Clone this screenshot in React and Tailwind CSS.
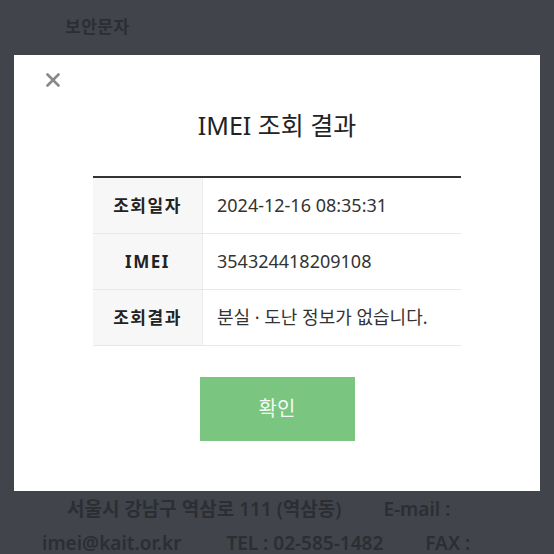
import React from "react";

const rows = [
  { label: "조회일자", value: "2024-12-16 08:35:31" },
  { label: "IMEI", value: "354324418209108" },
  { label: "조회결과", value: "분실 · 도난 정보가 없습니다." },
];

const App = () => {
  return (
    <div
      className="relative h-[554px] w-[554px] overflow-hidden bg-[#41444b]"
      style={{ fontFamily: '"Noto Sans", "Noto Sans CJK KR", sans-serif' }}
    >
      <div className="h-[55px] pl-[65px] pt-[14px]">
        <p className="text-[17px] font-bold tracking-[0.5px] text-[#2c2e33]">보안문자</p>
      </div>

      <div className="mx-[14px] h-[436px] bg-white">
        <div className="h-[50px] pl-[32px] pt-[18px]">
          <svg width="14" height="14" viewBox="0 0 14 14">
            <path d="M1.5 1.5 L12.5 12.5 M12.5 1.5 L1.5 12.5" stroke="#888" strokeWidth="2.6" strokeLinecap="round" />
          </svg>
        </div>

        <h1 className="text-center text-[25px] leading-[40px] text-[#222]">IMEI 조회 결과</h1>

        <div className="mx-[79px] mt-[31px] border-t-[2px] border-[#333]">
          {rows.map((row) => (
            <div key={row.label} className="flex h-[56px] border-b border-[#e8e8e8]">
              <div className="flex w-[110px] items-center justify-center border-r border-[#ececec] bg-[#f7f7f7] text-[17px] font-bold tracking-[1.5px] text-[#222]">
                {row.label}
              </div>
              <div className="flex flex-1 items-center pl-[14px] text-[18px] text-[#333]">{row.value}</div>
            </div>
          ))}
        </div>

        <div className="mt-[31px] flex justify-center">
          <button className="h-[64px] w-[155px] bg-[#7ac57f] text-[20px] text-[#f4fbf4]">확인</button>
        </div>
      </div>

      <div className="pt-[1px] text-[19px] font-semibold text-[#2c2e33]">
        <p className="pl-[67px] leading-[34px] whitespace-nowrap">
          서울시 강남구 역삼로 111 (역삼동)<span className="ml-[42px]">E-mail :</span>
        </p>
        <p className="mt-[6px] pl-[42px] leading-[22px] whitespace-nowrap">
          imei@kait.or.kr<span className="ml-[45px]">TEL : 02-585-1482</span>
          <span className="ml-[42px]">FAX :</span>
        </p>
      </div>
    </div>
  );
};

export default App;
